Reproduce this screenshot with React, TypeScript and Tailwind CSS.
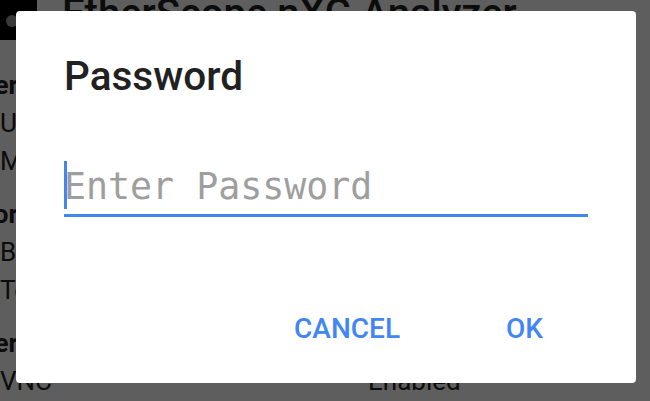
import React from "react";

function Row({ label, value }: { label: string; value?: string }) {
  return (
    <div className="flex h-[38px] items-center text-[26px] text-[#222]">
      <span className="w-[368px]">{label}</span>
      {value && <span>{value}</span>}
    </div>
  );
}

function Section({ title, children }: { title: string; children: React.ReactNode }) {
  return (
    <div className="flex flex-col">
      <div className="flex h-[38px] items-center -ml-[200px] w-[218px] justify-end text-[26px] font-bold text-[#222]">
        {title}
      </div>
      {children}
    </div>
  );
}

export default function App() {
  return (
    <div className="relative w-[650px] h-[401px] overflow-hidden bg-white font-['Roboto',sans-serif]">
      {/* background page */}
      <div className="flex flex-col">
        <div className="flex items-center h-[52px] -mt-[12px] gap-[25px]">
          <div className="relative w-[37px] h-[52px] bg-black rounded-r-[10px]">
            <div className="absolute left-[6px] top-[27px] w-[12px] h-[12px] rounded-full bg-[#9a9a9a]" />
          </div>
          <span className="text-[40px] font-medium text-[#222] leading-[52px]">EtherScope nXG Analyzer</span>
        </div>
        <div className="flex flex-col mt-[26px] gap-[15px]">
          <Section title="Tester">
            <Row label="Unit" />
            <Row label="Model" />
          </Section>
          <Section title="Monitor">
            <Row label="Battery" />
            <Row label="Temperature" />
          </Section>
          <Section title="Server">
            <Row label="VNC" value="Enabled" />
          </Section>
        </div>
      </div>

      {/* overlay */}
      <div className="absolute inset-0 bg-[rgba(0,0,0,0.63)]" />

      {/* dialog */}
      <div className="absolute left-[16px] top-[11px] w-[620px] h-[372px] bg-white rounded-[4px] flex flex-col pl-[48px] pt-[42px]">
        <div className="text-[40.5px] leading-[47px] font-medium text-[#212121]">Password</div>
        <div className="mt-[61px] w-[524px] flex flex-col">
          <div className="relative h-[48px]">
            <div className="pt-[3px] font-['DejaVu_Sans_Mono',monospace] text-[36.6px] leading-[45px] text-[#9e9e9e] whitespace-nowrap">
              Enter Password
            </div>
            <div className="absolute left-0 top-0 w-[3px] h-[48px] bg-[#4285f4]" />
          </div>
          <div className="mt-[5px] h-[3px] bg-[#4285f4]" />
        </div>
        <div className="mt-[97px] flex justify-end pr-[93px] gap-[106px] text-[28px] leading-[30px] font-medium text-[#4285f4]">
          <span>CANCEL</span>
          <span>OK</span>
        </div>
      </div>
    </div>
  );
}
